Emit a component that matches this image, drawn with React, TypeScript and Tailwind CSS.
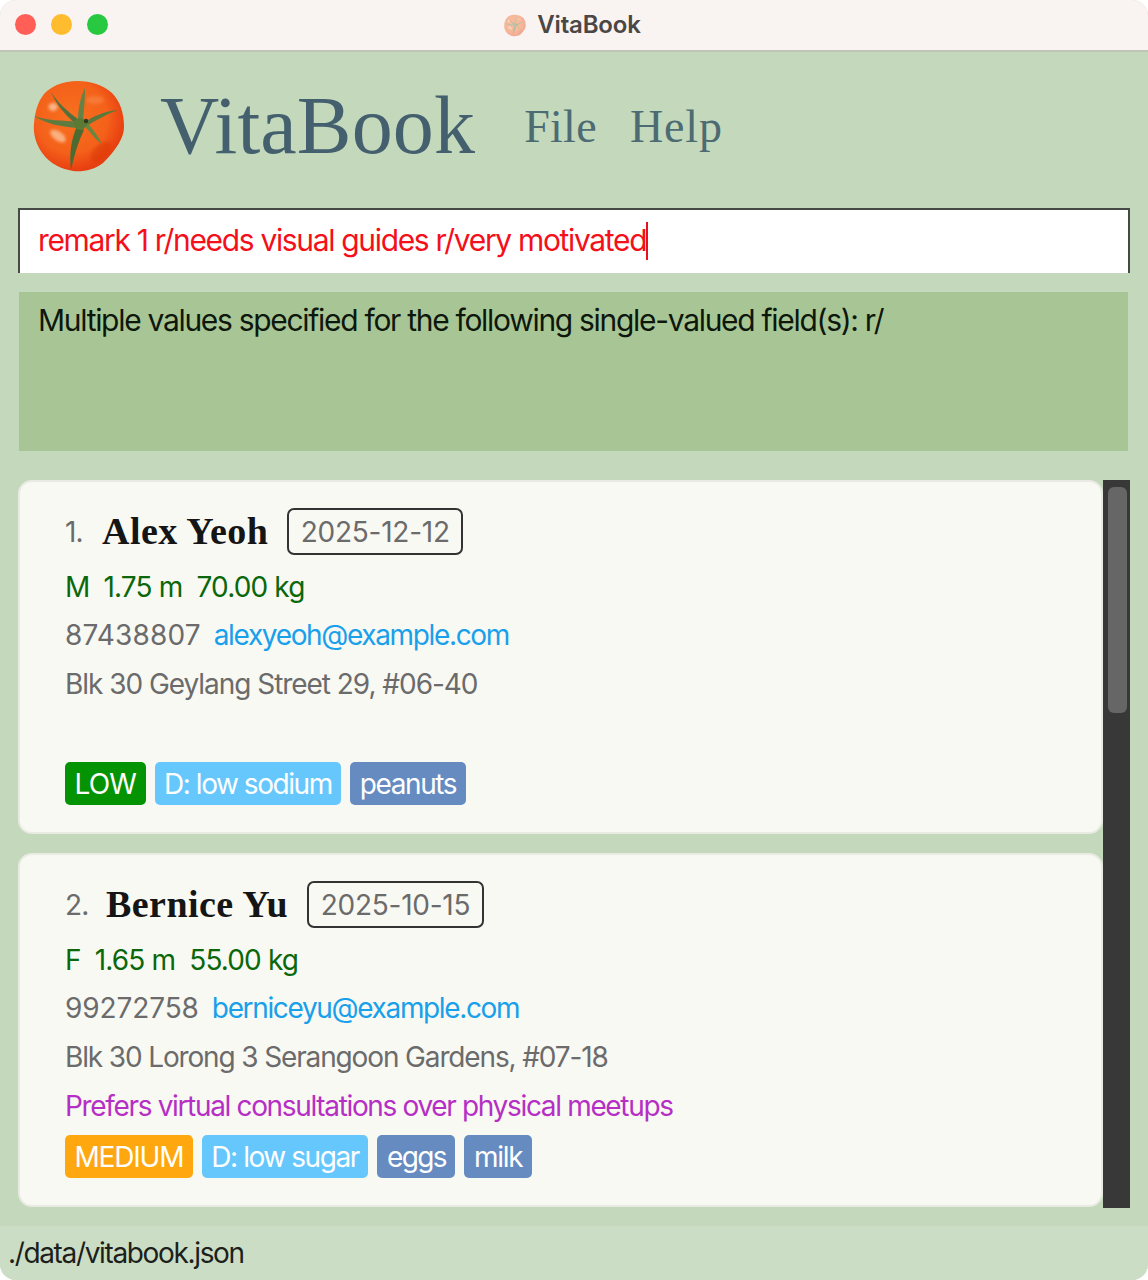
import React from 'react';

const sans = "font-['Inter','Noto_Sans',sans-serif]";
const serif = "font-['Liberation_Serif',serif]";

const Tomato: React.FC<{ className?: string; id: string }> = ({ className, id }) => (
  <svg className={className} viewBox="0 0 92 92">
    <defs>
      <radialGradient id={id} cx="42%" cy="40%" r="66%">
        <stop offset="0%" stopColor="#f7701f" />
        <stop offset="60%" stopColor="#f4611a" />
        <stop offset="86%" stopColor="#ea4312" />
        <stop offset="100%" stopColor="#dc3a10" />
      </radialGradient>
      <filter id={`${id}-blur`}>
        <feGaussianBlur stdDeviation="1.6" />
      </filter>
    </defs>
    <path
      d="M34 2C50-1 68 3 79 13C87 21 91 33 91 47C91 58 83 70 70 83C61 90 50 92 40 91C29 89 17 84 10 74C3 65 0 54 1 44C2 30 6 18 14 11C20 6 27 3 34 2Z"
      fill={`url(#${id})`}
    />
    <g filter={`url(#${id}-blur)`}>
      <ellipse cx="20" cy="27" rx="4.5" ry="4" fill="#fcc9a4" opacity="0.8" />
      <ellipse cx="25" cy="56" rx="9" ry="4.5" fill="#fcc7a0" opacity="0.75" transform="rotate(35 25 56)" />
      <ellipse cx="62" cy="20" rx="9" ry="4" fill="#f98a4a" opacity="0.55" />
      <ellipse cx="68" cy="72" rx="13" ry="7" fill="#d8320c" opacity="0.45" transform="rotate(-45 68 72)" />
    </g>
    <path d="M18 12C24 22 34 31 46 40L43 44C32 35 23 24 18 12Z" fill="#53703a" />
    <path d="M52 8C47 18 45 30 45 42L50 42C51 30 52 20 52 8Z" fill="#658246" />
    <path d="M85 30C72 31 60 36 49 44L52 47C63 40 74 34 85 30Z" fill="#5a7a3c" />
    <path d="M1 36C14 41 29 40 45 42L45 48C29 47 13 44 1 36Z" fill="#5f7c40" />
    <path d="M52 47C58 52 62 60 69 64C65 56 60 49 55 44Z" fill="#68863f" />
    <path d="M44 46C38 60 36 74 38 90C41 76 45 62 51 50Z" fill="#4d6a30" />
    <circle cx="47" cy="44" r="6" fill="#5d7a34" />
    <circle cx="53" cy="41" r="2.2" fill="#2f3a1c" />
  </svg>
);

const Tag: React.FC<{ bg: string; track: string; children: React.ReactNode }> = ({ bg, track, children }) => (
  <span className={`h-[43px] rounded-[5px] px-[9.5px] flex items-center text-white ${bg} ${track}`}>{children}</span>
);

type PersonCard = {
  index: string;
  indexWidth: string;
  name: string;
  date: string;
  body: string;
  phone: string;
  phoneTrack: string;
  email: string;
  address: string;
  addressTrack: string;
  remark: string;
  tags: React.ReactNode;
};

const people: PersonCard[] = [
  {
    index: '1.',
    indexWidth: 'w-[37px]',
    name: 'Alex Yeoh',
    date: '2025-12-12',
    body: 'M  1.75 m  70.00 kg',
    phone: '87438807',
    phoneTrack: 'tracking-[0.15px]',
    email: 'alexyeoh@example.com',
    address: 'Blk 30 Geylang Street 29, #06-40',
    addressTrack: 'tracking-[-1.04px]',
    remark: '',
    tags: (
      <>
        <Tag bg="bg-[#039303]" track="tracking-[-0.85px]">LOW</Tag>
        <Tag bg="bg-[#66c7fd]" track="tracking-[-1.45px]">D: low sodium</Tag>
        <Tag bg="bg-[#658bc0]" track="tracking-[-1.4px]">peanuts</Tag>
      </>
    ),
  },
  {
    index: '2.',
    indexWidth: 'w-[41px]',
    name: 'Bernice Yu',
    date: '2025-10-15',
    body: 'F  1.65 m  55.00 kg',
    phone: '99272758',
    phoneTrack: 'tracking-[-0.1px]',
    email: 'berniceyu@example.com',
    address: 'Blk 30 Lorong 3 Serangoon Gardens, #07-18',
    addressTrack: 'tracking-[-1.14px]',
    remark: 'Prefers virtual consultations over physical meetups',
    tags: (
      <>
        <Tag bg="bg-[#ffa70f]" track="tracking-[-1.2px]">MEDIUM</Tag>
        <Tag bg="bg-[#66c7fd]" track="tracking-[-1.43px]">D: low sugar</Tag>
        <Tag bg="bg-[#658bc0]" track="tracking-[-1.6px]">eggs</Tag>
        <Tag bg="bg-[#658bc0]" track="tracking-[-1.3px]">milk</Tag>
      </>
    ),
  },
];

const Card: React.FC<{ p: PersonCard }> = ({ p }) => (
  <div className="h-[354px] rounded-[14px] bg-[#f9f9f4] border-[2px] border-[#e9ebe3] pl-[45px] pt-[26px] flex flex-col">
    <div className="flex items-center h-[47px]">
      <span className={`text-[#6b6b6b] ${p.indexWidth}`}>{p.index}</span>
      <span className={`${serif} font-bold text-[38px] text-[#151515] tracking-[0.45px] mr-[19px]`}>{p.name}</span>
      <span className="h-[47px] rounded-[7px] border-[2px] border-[#333] px-[11.5px] flex items-center text-[#6b6b6b] tracking-[-0.25px]">
        {p.date}
      </span>
    </div>
    <div className="h-[49px] mt-[7px] flex items-center text-[#0a670a] whitespace-pre">{p.body}</div>
    <div className="h-[48px] flex items-center gap-[13px]">
      <span className={`text-[#6b6b6b] ${p.phoneTrack}`}>{p.phone}</span>
      <span className="text-[#18a0ea] tracking-[-1.35px]">{p.email}</span>
    </div>
    <div className={`h-[49px] flex items-center text-[#6b6b6b] ${p.addressTrack}`}>{p.address}</div>
    <div className="h-[49px] flex items-center text-[#b52fc4] tracking-[-1.34px]">{p.remark}</div>
    <div className="flex gap-[9px] mt-[5px]">{p.tags}</div>
  </div>
);

export default function App() {
  return (
    <div className="w-[1148px] h-[1280px] bg-white">
      <div className={`${sans} w-full h-full rounded-[16px] overflow-hidden flex flex-col bg-[#c4d8bc] text-[28px] tracking-[-0.85px]`}>
        {/* title bar */}
        <div className="h-[52px] shrink-0 bg-[#f9f3f1] border-b-[2px] border-[#bfc4b5] relative flex items-center justify-center">
          <div className="absolute left-[15px] top-[14px] flex gap-[15px]">
            <span className="w-[21px] h-[21px] rounded-full bg-[#ff5f57]" />
            <span className="w-[21px] h-[21px] rounded-full bg-[#febc2e]" />
            <span className="w-[21px] h-[21px] rounded-full bg-[#28c840]" />
          </div>
          <div className="flex items-center gap-[11px] mr-[3px]">
            <Tomato id="small-tomato" className="w-[22px] h-[27px] opacity-40" />
            <span className="text-[24px] font-semibold text-[#4a4745] tracking-[-0.15px]">VitaBook</span>
          </div>
        </div>

        {/* menu */}
        <div className={`${serif} h-[156px] shrink-0 flex items-center pl-[33px] text-[#44606e]`}>
          <Tomato id="big-tomato" className="w-[92px] h-[92px] mt-[-8px]" />
          <span className="text-[82px] ml-[35px] tracking-[0.15px] mt-[-10px]">VitaBook</span>
          <span className="text-[46px] ml-[49px] text-[#4d6b72] tracking-[0.3px] mt-[-8px]">File</span>
          <span className="text-[46px] ml-[33px] text-[#4d6b72] tracking-[0.9px] mt-[-8px]">Help</span>
        </div>

        {/* command box */}
        <div className="mx-[18px] h-[65px] shrink-0 bg-white border-t-[2px] border-x-[2px] border-[#454a45] flex items-center pl-[18px] text-[30px] tracking-[-1.34px] text-[#f4101a] pb-[2px]">
          remark 1 r/needs visual guides r/very motivated
          <span className="w-[2px] h-[38px] bg-[#e8101a]" />
        </div>

        {/* result display */}
        <div className="ml-[19px] mr-[20px] mt-[19px] h-[159px] shrink-0 bg-[#a8c695] pl-[19px] pt-[6px] text-[30px] tracking-[-1.3px] text-[#0d170c]">
          Multiple values specified for the following single-valued field(s): r/
        </div>

        {/* person list */}
        <div className="mt-[29px] ml-[18px] mr-[18px] h-[728px] shrink-0 flex overflow-hidden">
          <div className="flex-1 flex flex-col gap-[19px]">
            {people.map((p) => (
              <Card key={p.index} p={p} />
            ))}
          </div>
          <div className="w-[27px] bg-[#383838] pl-[5px] pr-[3px] pt-[7px]">
            <div className="h-[226px] rounded-[6px] bg-[#666666]" />
          </div>
        </div>

        {/* status bar */}
        <div className="mt-[18px] flex-1 bg-[#cbdec5] pl-[8px] flex items-center text-[#1c1f1b] tracking-[-1.35px]">./data/vitabook.json</div>
      </div>
    </div>
  );
}
